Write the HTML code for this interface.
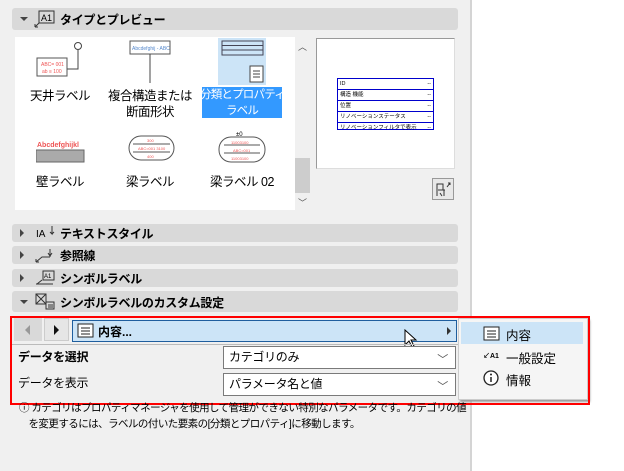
<!DOCTYPE html>
<html><head><meta charset="utf-8"><style>
*{margin:0;padding:0;box-sizing:border-box}
body{width:624px;height:471px;overflow:hidden;background:#fff;font-family:"Liberation Sans","Noto Sans CJK JP",sans-serif;font-size:12px;color:#000;position:relative}
.abs{position:absolute}
.left{left:0;top:0;width:470px;height:471px;background:#f0f0f0}
.vline{left:470px;top:0;width:2px;height:471px;background:#d4d4d4}
.bar{left:12px;width:446px;background:#d9d9d9;border-radius:3px}
.bar .t{position:absolute;left:48px;font-size:12px;font-weight:bold;letter-spacing:-0.3px}
.tri{position:absolute;left:7px;width:0;height:0}
.tr{border-top:4px solid transparent;border-bottom:4px solid transparent;border-left:4px solid #444}
.td{border-left:4px solid transparent;border-right:4px solid transparent;border-top:4px solid #444}
.lbl{position:absolute;text-align:center;font-size:12.5px;line-height:16px;white-space:nowrap;letter-spacing:-0.5px}
.ic{position:absolute}
.dd{background:#fff;border:1px solid #7a7a7a;font-size:12px;padding-left:5px;line-height:21px;letter-spacing:-0.3px}
.chev{position:absolute;right:7px;top:3px;color:#555;font-size:11px}
</style></head><body>
<div class="abs left"></div>
<div class="abs vline"></div>

<div class="abs bar" style="top:8px;height:22px"><div class="tri td" style="top:9px;left:8px"></div>
<svg class="ic" style="left:22px;top:2px" width="22" height="18"><rect x="5" y="1" width="15" height="12" fill="none" stroke="#333"/><text x="7" y="11" font-size="9" font-family="Liberation Sans">A1</text><path d="M1 17 L5 13 M1 17 h3 M1 17 v-3" stroke="#333" fill="none"/></svg>
<div class="t" style="top:3px">タイプとプレビュー</div></div>

<div class="abs" style="left:15px;top:37px;width:280px;height:173px;background:#fff"></div>
<div class="abs" style="left:295px;top:37px;width:15px;height:173px;background:#f0f0f0"></div>
<div class="abs" style="left:295px;top:158px;width:15px;height:35px;background:#cdcdcd"></div>
<div class="abs" style="left:298px;top:40px;font-size:9px;color:#555">︿</div>
<div class="abs" style="left:298px;top:196px;font-size:9px;color:#555">﹀</div>

<svg class="ic" style="left:35px;top:40px" width="50" height="38"><circle cx="43" cy="6" r="3.5" fill="#fff" stroke="#444"/><path d="M43 10 V29 H32" stroke="#444" fill="none"/><rect x="2" y="18" width="30" height="18" fill="#fff" stroke="#555"/><text x="6" y="26" font-size="5" fill="#e55">ABC= 001</text><text x="7" y="33" font-size="5" fill="#e55">ab ≡ 100</text></svg>
<div class="lbl" style="left:25px;top:88px;width:70px">天井ラベル</div>
<svg class="ic" style="left:128px;top:40px" width="44" height="44"><rect x="2" y="1" width="40" height="13" fill="#fff" stroke="#555"/><text x="4" y="10" font-size="5" fill="#58c">Abcdefghij - ABC</text><path d="M22 14 V43" stroke="#444"/></svg>
<div class="lbl" style="left:105px;top:88px;width:90px">複合構造または<br>断面形状</div>
<div class="abs" style="left:218px;top:38px;width:48px;height:47px;background:#cce4f7"></div>
<svg class="ic" style="left:220px;top:40px" width="46" height="44"><rect x="2" y="1" width="41" height="14" fill="none" stroke="#445"/><path d="M2 5.5h41M2 10h41" stroke="#445"/><rect x="30" y="26" width="13" height="16" fill="#fff" stroke="#444"/><path d="M33 31h7M33 34h7M33 37h7" stroke="#444"/></svg>
<div class="abs" style="left:202px;top:87px;width:80px;height:31px;background:#3399ff"></div>
<div class="lbl" style="left:200px;top:87px;width:84px;color:#fff;font-size:11.5px;letter-spacing:-0.8px">分類とプロパティ<br>ラベル</div>

<svg class="ic" style="left:36px;top:140px" width="50" height="24"><text x="1" y="7" font-size="7" fill="#e55" font-weight="bold">Abcdefghijkl</text><rect x="0" y="10" width="48" height="12" fill="#aaa" stroke="#666"/></svg>
<div class="lbl" style="left:25px;top:174px;width:70px">壁ラベル</div>
<svg class="ic" style="left:128px;top:135px" width="48" height="28"><rect x="1" y="1" width="45" height="24" rx="12" fill="#fff" stroke="#555"/><path d="M5 9h37M5 17h37" stroke="#555"/><text x="19" y="7" font-size="4" fill="#e55">300</text><text x="10" y="15" font-size="4" fill="#e55">ABC=001 3100</text><text x="19" y="23" font-size="4" fill="#e55">400</text></svg>
<div class="lbl" style="left:105px;top:174px;width:90px">梁ラベル</div>
<svg class="ic" style="left:218px;top:130px" width="50" height="34"><text x="18" y="6" font-size="6">±0</text><rect x="1" y="7" width="46" height="25" rx="12" fill="#fff" stroke="#555"/><path d="M6 15h36M6 23h36" stroke="#555"/><text x="13" y="14" font-size="4" fill="#e55">11003100</text><text x="15" y="22" font-size="4" fill="#e55">ABC=001</text><text x="13" y="30" font-size="4" fill="#e55">11003100</text></svg>
<div class="lbl" style="left:202px;top:174px;width:80px">梁ラベル 02</div>

<div class="abs" style="left:316px;top:38px;width:139px;height:131px;background:#fff;border:1px solid #999;border-right-color:#ddd;border-bottom-color:#ddd"></div>
<div class="abs" style="left:337px;top:78px;width:97px;height:52px;border:1px solid #00c;font-size:5.5px;line-height:10px">
<div style="border-bottom:1px solid #00c;padding-left:2px">ID<span style="float:right;padding-right:2px">--</span></div>
<div style="border-bottom:1px solid #00c;padding-left:2px">構造 機能<span style="float:right;padding-right:2px">--</span></div>
<div style="border-bottom:1px solid #00c;padding-left:2px">位置<span style="float:right;padding-right:2px">--</span></div>
<div style="border-bottom:1px solid #00c;padding-left:2px">リノベーションステータス<span style="float:right;padding-right:2px">--</span></div>
<div style="padding-left:2px">リノベーションフィルタで表示<span style="float:right;padding-right:2px">--</span></div></div>
<div class="abs" style="left:432px;top:178px;width:22px;height:22px;border:1px solid #999;background:#e8e8e8"></div>
<svg class="ic" style="left:434px;top:180px" width="18" height="18"><path d="M3 16V4h6v6H5M11 10H4M10 16V10M8 16l-2-3M13 7l3-4M14 3h2v2" stroke="#333" fill="none"/></svg>

<div class="abs bar" style="top:224px;height:18px"><div class="tri tr" style="top:5px;left:8px"></div><svg class="ic" style="left:22px;top:1px" width="24" height="16"><text x="2" y="12" font-size="10">IA</text><path d="M18 1v8l-2-2M18 9l2-2" stroke="#333" fill="none"/></svg><div class="t" style="top:1px">テキストスタイル</div></div>
<div class="abs bar" style="top:246px;height:18px"><div class="tri tr" style="top:5px;left:8px"></div><svg class="ic" style="left:22px;top:1px" width="24" height="16"><path d="M2 15l6-5h8M16 10V2M14 6l2 3 2-3M2 15h3M2 15v-3" stroke="#333" fill="none"/></svg><div class="t" style="top:1px">参照線</div></div>
<div class="abs bar" style="top:269px;height:18px"><div class="tri tr" style="top:5px;left:8px"></div><svg class="ic" style="left:22px;top:1px" width="24" height="16"><rect x="9" y="1" width="11" height="9" fill="none" stroke="#333"/><text x="10" y="8" font-size="6">A1</text><path d="M2 14h17M3 14l5-4" stroke="#333"/></svg><div class="t" style="top:1px">シンボルラベル</div></div>
<div class="abs bar" style="top:291px;height:21px"><div class="tri td" style="top:9px;left:8px"></div><svg class="ic" style="left:22px;top:2px" width="24" height="18"><rect x="2" y="1" width="10" height="10" fill="none" stroke="#333"/><path d="M2 1l10 10M12 1L2 11M12 9h8v7h-8zM14 12h5M14 14h5" stroke="#333" fill="none"/></svg><div class="t" style="top:3px">シンボルラベルのカスタム設定</div></div>

<div class="abs" style="left:14px;top:318px;width:28px;height:23px;background:#d9d9d9"></div>
<div class="abs" style="left:25px;top:325px;width:0;height:0;border-top:5px solid transparent;border-bottom:5px solid transparent;border-right:5px solid #999"></div>
<div class="abs" style="left:44px;top:318px;width:25px;height:23px;background:#e6e6e6;border:1px solid #ccc"></div>
<div class="abs" style="left:54px;top:325px;width:0;height:0;border-top:5px solid transparent;border-bottom:5px solid transparent;border-left:5px solid #111"></div>
<div class="abs" style="left:72px;top:320px;width:385px;height:22px;background:#cce4f7;border:1px solid #1f5e9e"></div>
<svg class="ic" style="left:77px;top:323px" width="18" height="16"><rect x="1" y="1" width="15" height="13" fill="#fff" stroke="#222"/><path d="M4 5h9M4 8h9M4 11h9" stroke="#222"/></svg>
<div class="abs" style="left:98px;top:323px;font-weight:bold;font-size:12px">内容...</div>
<div class="abs" style="left:447px;top:327px;width:0;height:0;border-top:4px solid transparent;border-bottom:4px solid transparent;border-left:4px solid #333"></div>
<svg class="ic" style="left:404px;top:329px" width="14" height="20"><path d="M1 1v15l4-4 3 6 2-1-3-6h5z" fill="#fff" stroke="#000"/></svg>
<div class="abs" style="left:12px;top:344px;width:446px;height:1px;background:#bbb"></div>
<div class="abs" style="left:18px;top:348px;font-weight:bold;font-size:12px;letter-spacing:-0.3px">データを選択</div>
<div class="abs dd" style="left:223px;top:346px;width:233px;height:23px">カテゴリのみ<span class="chev">﹀</span></div>
<div class="abs" style="left:18px;top:374px;font-size:12px;letter-spacing:-0.3px">データを表示</div>
<div class="abs dd" style="left:223px;top:373px;width:233px;height:23px">パラメータ名と値<span class="chev">﹀</span></div>

<div class="abs" style="left:458px;top:318px;width:130px;height:82px;background:#f5f5f5;border:1px solid #ccc;box-shadow:2px 2px 2px #999"></div>
<div class="abs" style="left:461px;top:322px;width:122px;height:22px;background:#cce4f7"></div>
<svg class="ic" style="left:483px;top:326px" width="18" height="16"><rect x="1" y="1" width="15" height="13" fill="#fff" stroke="#222"/><path d="M4 5h9M4 8h9M4 11h9" stroke="#222"/></svg>
<div class="abs" style="left:506px;top:325px;font-size:12.5px">内容</div>
<div class="abs" style="left:483px;top:351px;font-size:7px;font-weight:bold">↙A1</div>
<div class="abs" style="left:506px;top:348px;font-size:12.5px">一般設定</div>
<svg class="ic" style="left:483px;top:370px" width="16" height="16"><circle cx="8" cy="8" r="7" fill="#fff" stroke="#222" stroke-width="1.3"/><path d="M8 7v5" stroke="#222" stroke-width="1.5"/><circle cx="8" cy="4.5" r="1" fill="#222"/></svg>
<div class="abs" style="left:506px;top:370px;font-size:12.5px">情報</div>

<div class="abs" style="left:10px;top:316px;width:580px;height:89px;border:2px solid #f00"></div>

<div class="abs" style="left:19px;top:400px;font-size:10.5px;line-height:16px;white-space:nowrap;letter-spacing:-0.55px">ⓘ カテゴリはプロパティマネージャを使用して管理ができない特別なパラメータです。カテゴリの値<br>&nbsp;&nbsp;&nbsp;&nbsp;を変更するには、ラベルの付いた要素の[分類とプロパティ]に移動します。</div>
</body></html>
